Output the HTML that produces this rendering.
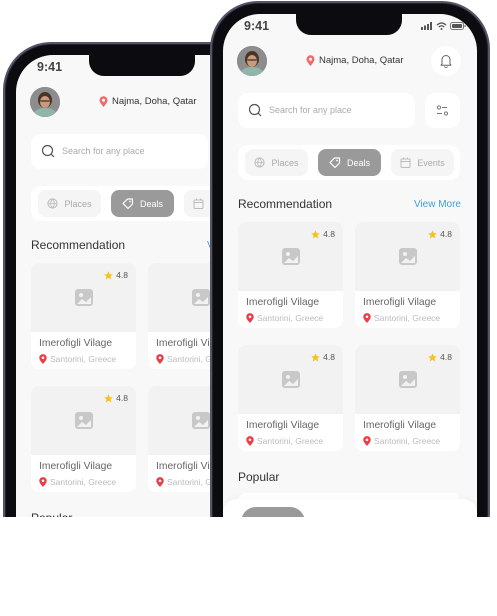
<!DOCTYPE html>
<html><head><meta charset="utf-8"><style>
*{margin:0;padding:0;box-sizing:border-box}
html,body{width:497px;height:616px;overflow:hidden}
body{background:#fff;position:relative;font-family:"Liberation Sans",sans-serif}
.clip{position:absolute;left:0;top:0;width:497px;height:517px;overflow:hidden}
.phone{position:absolute;width:280px;height:560px;border-radius:48px;background:#0c0c10;border:2px solid #55556a;box-shadow:inset 0 0 0 1px #23232e}
.screen{position:absolute;left:11px;top:11px;width:254px;height:545px;border-radius:37px;background:#f8f8f8;overflow:hidden}
.a{position:absolute}
.notch{left:73px;top:0;width:106px;height:21px;background:#0c0c10;border-radius:0 0 15px 15px}
.time{left:21px;top:5px;font-size:12.5px;font-weight:bold;color:#444}
.av{left:14px;top:32px;width:30px;height:30px;border-radius:50%;overflow:hidden;background:#8a8a8a}
.loc{left:83px;top:41px;font-size:9.5px;color:#333;display:flex;align-items:center;gap:4px}
.bell{left:208px;top:32px;width:30px;height:30px;border-radius:50%;background:#fff}
.search{left:15px;top:79px;width:177px;height:35px;background:#fff;border-radius:10px}
.search span{position:absolute;left:31px;top:12px;font-size:9px;color:#aaa}
.filter{left:202px;top:79px;width:35px;height:35px;background:#fff;border-radius:10px}
.tabs{left:15px;top:131px;width:222px;height:35px;background:#fff;border-radius:10px}
.chip{position:absolute;top:4px;width:63px;height:27px;border-radius:8px;background:#f5f5f5;font-size:9px;color:#aaa;display:flex;align-items:center;justify-content:center;gap:6px}
.chip.on{background:#9a9a9a;color:#fff}
.h{font-size:12px;color:#333}
.vm{font-size:10px;color:#3ea0dc}
.card{position:absolute;width:105px;height:106px;background:#fff;border-radius:8px;overflow:hidden}
.card .img{position:absolute;left:0;top:0;width:105px;height:69px;background:#f2f2f2}
.card .st{position:absolute;right:8px;top:7px;font-size:8.5px;color:#555;display:flex;align-items:center;gap:3px}
.card .t{position:absolute;left:8px;top:75px;font-size:10.3px;color:#666}
.card .l{position:absolute;left:8px;top:91px;font-size:8.5px;color:#bbb;display:flex;align-items:center;gap:3px}
.nav{left:0;top:485px;width:254px;height:60px;background:#fff;border-radius:14px 14px 0 0;box-shadow:0 -2px 6px rgba(0,0,0,.03)}
.pill{left:18px;top:493px;width:64px;height:30px;background:#9a9a9a;border-radius:15px}
</style></head><body>
<div class="clip">
<div class="phone" style="left:3px;top:42px">
<div class="screen" id="s1"></div></div>
<div class="phone" style="left:210px;top:1px">
<div class="screen" id="s2"></div></div>
</div>
<template id="tp">
<div class="a notch"></div>
<div class="a time">9:41</div>
<div class="a" style="left:198px;top:8px;display:flex;gap:3px;align-items:center">
<svg width="12" height="8"><rect x="0" y="5" width="2" height="3" fill="#555"/><rect x="3" y="3.5" width="2" height="4.5" fill="#555"/><rect x="6" y="2" width="2" height="6" fill="#555"/><rect x="9" y="0" width="2" height="8" fill="#555"/></svg>
<svg width="11" height="8"><path d="M1 3Q5.5-1 10 3M2.8 5Q5.5 2.5 8.2 5" stroke="#555" stroke-width="1.3" fill="none"/><circle cx="5.5" cy="7" r="1" fill="#555"/></svg>
<svg width="16" height="8"><rect x=".5" y=".5" width="13" height="7" rx="2" fill="none" stroke="#777"/><rect x="2" y="2" width="10" height="4" rx="1" fill="#555"/><rect x="14.5" y="3" width="1.2" height="2" fill="#777"/></svg>
</div>
<div class="a av"><svg width="30" height="30"><rect width="30" height="30" fill="#8d8d8d"/><path d="M2 30Q4 21 15 21Q26 21 28 30Z" fill="#8fb6a8"/><ellipse cx="15" cy="13" rx="7" ry="8" fill="#4a3428"/><ellipse cx="15" cy="15" rx="5" ry="6" fill="#c99a7c"/><rect x="10.5" y="13" width="9" height="2" fill="#3a2a22" opacity=".6"/></svg></div>
<div class="a loc"><svg width="9" height="11"><path d="M4.5 11C2 8 .5 6 .5 4.2a4 4 0 0 1 8 0C8.5 6 7 8 4.5 11Z" fill="#f26b6b"/><circle cx="4.5" cy="4.2" r="1.5" fill="#fff"/></svg>Najma, Doha, Qatar</div>
<div class="a bell"><svg width="30" height="30"><path d="M11 18V13.5a4 4 0 0 1 8 0V18l1 1.2H10Z M13.5 20.5a1.6 1.6 0 0 0 3 0" stroke="#666" stroke-width="1" fill="none" stroke-linejoin="round"/></svg></div>
<div class="a search"><svg class="a" style="left:10px;top:10px" width="15" height="15"><circle cx="6.5" cy="6.5" r="5" stroke="#555" stroke-width="1.2" fill="none"/><path d="M10.2 10.2L13 13" stroke="#555" stroke-width="1.2"/></svg><span>Search for any place</span></div>
<div class="a filter"><svg width="35" height="35"><circle cx="14" cy="14.5" r="1.6" stroke="#777" fill="none"/><path d="M17 14.5h5M12 20.5h5" stroke="#777"/><circle cx="21" cy="20.5" r="1.6" stroke="#777" fill="none"/></svg></div>
<div class="a tabs">
<div class="chip" style="left:7px"><svg width="11" height="11"><circle cx="5.5" cy="5.5" r="4.6" stroke="#bbb" fill="none"/><path d="M1 5.5h9M5.5 1c-2.5 3-2.5 6 0 9M5.5 1c2.5 3 2.5 6 0 9" stroke="#bbb" fill="none" stroke-width=".8"/></svg>Places</div>
<div class="chip on" style="left:80px"><svg width="12" height="12"><path d="M1 5.5L5.5 1H10.5V6L6 10.5Z" stroke="#fff" stroke-width="1.2" fill="none" stroke-linejoin="round"/><circle cx="8" cy="3.5" r=".9" fill="#fff"/></svg>Deals</div>
<div class="chip" style="left:153px"><svg width="11" height="11"><rect x="1" y="2" width="9" height="8.5" rx="1" stroke="#bbb" fill="none"/><path d="M1 4.5h9M3.5 0.5v2M7.5 .5v2" stroke="#bbb"/></svg>Events</div>
</div>
<div class="a h" style="left:15px;top:183px">Recommendation</div>
<div class="a vm" style="right:16px;top:185px">View More</div>
CARDS
<div class="a h" style="left:15px;top:456px">Popular</div>
<div class="a" style="left:15px;top:479px;width:222px;height:20px;background:#fff;border-radius:8px"></div>
<div class="a nav"></div>
<div class="a pill"></div>
</template>
<script>
var card=function(x,y){return '<div class="card" style="left:'+x+'px;top:'+y+'px"><div class="img"></div><svg class="a" style="left:44px;top:26px" width="18" height="17"><rect width="18" height="17" rx="3" fill="#c8c8c8"/><circle cx="6" cy="6" r="2" fill="#f2f2f2"/><path d="M2 15L7 10L11 13L16 8V15Z" fill="#f2f2f2"/></svg><div class="st"><svg width="9" height="9"><path d="M4.5 .3L5.8 3.2 8.8 3.4 6.5 5.4 7.2 8.5 4.5 6.8 1.8 8.5 2.5 5.4 .2 3.4 3.2 3.2Z" fill="#f7c21a"/></svg>4.8</div><div class="t">Imerofigli Vilage</div><div class="l"><svg width="8" height="10"><path d="M4 10C1.8 7.5.3 5.8.3 3.8a3.7 3.7 0 0 1 7.4 0C7.7 5.8 6.2 7.5 4 10Z" fill="#ee3b45"/><circle cx="4" cy="3.8" r="1.3" fill="#fff"/></svg>Santorini, Greece</div></div>';};
var c=card(15,208)+card(132,208)+card(15,331)+card(132,331);
var h=document.getElementById('tp').innerHTML.replace('CARDS',c);
document.getElementById('s1').innerHTML=h;
document.getElementById('s2').innerHTML=h;
</script>
</body></html>
